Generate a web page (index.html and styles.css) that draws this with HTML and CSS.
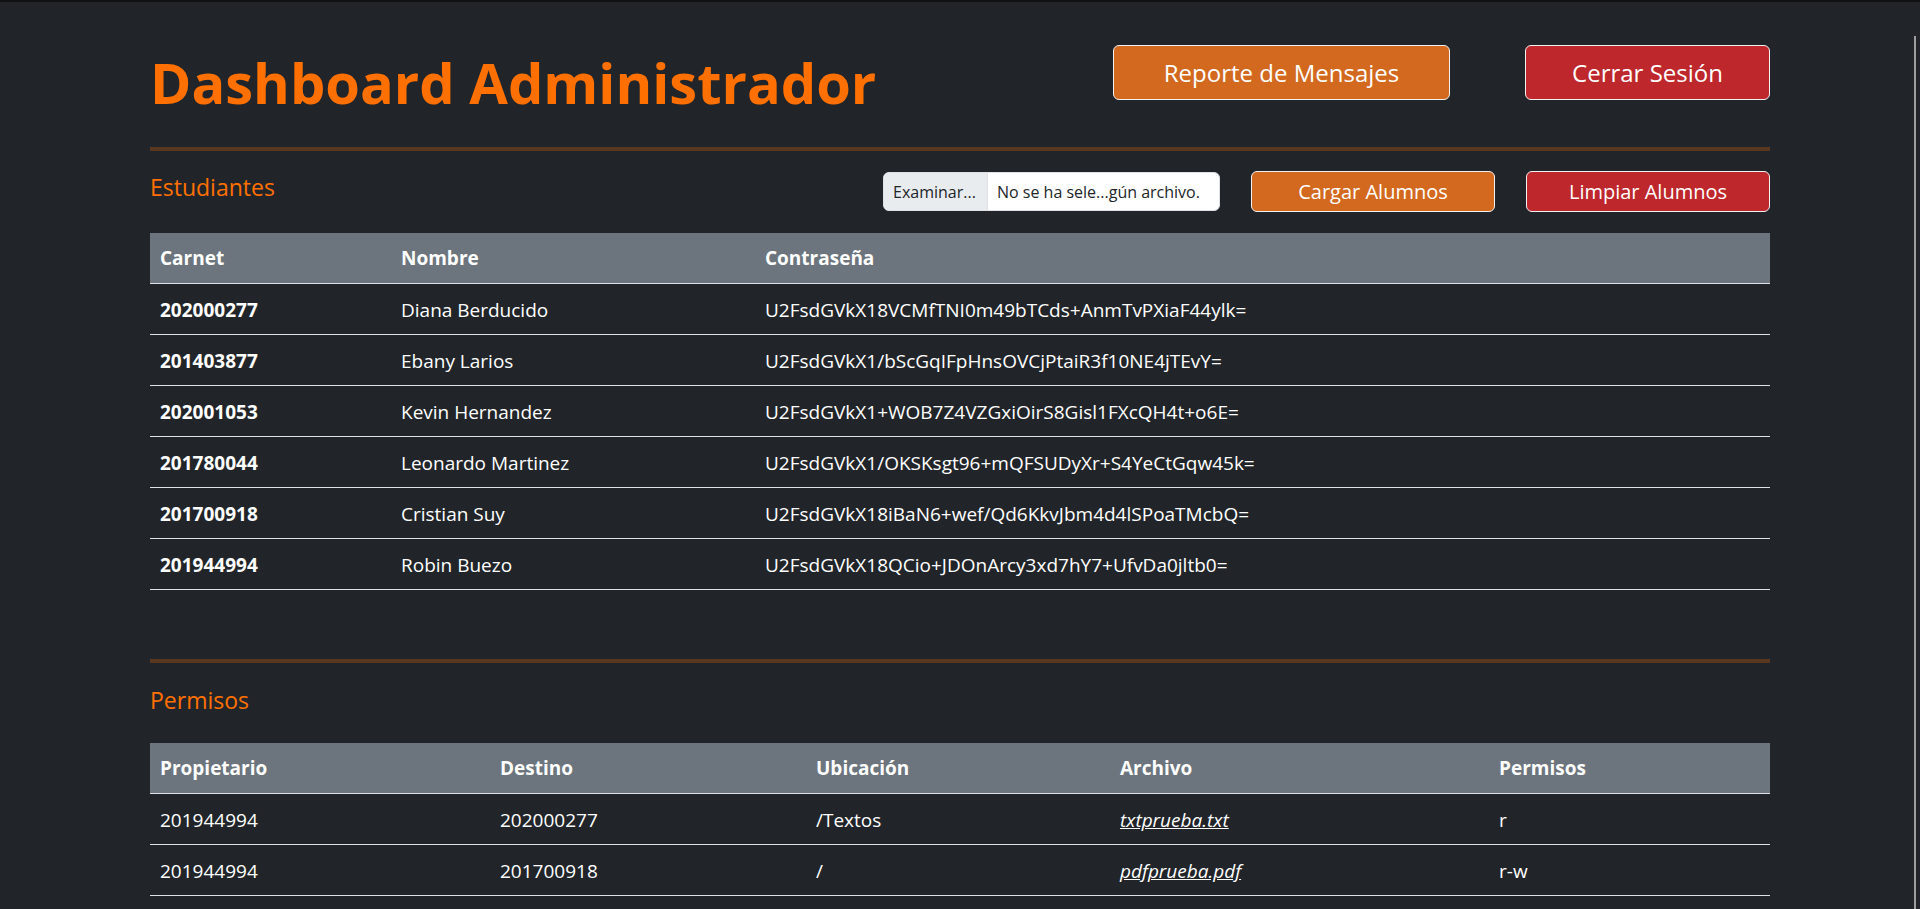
FILE: index.html
```html
<!DOCTYPE html>
<html lang="es">
<head>
<meta charset="utf-8">
<title>Dashboard Administrador</title>
<link rel="stylesheet" href="styles.css">
</head>
<body>
<div class="scroll-thumb"></div>
<main class="page">
  <header class="top">
    <h1 class="title">Dashboard Administrador</h1>
    <div class="top-actions">
      <button class="btn btn-orange btn-report">Reporte de Mensajes</button>
      <button class="btn btn-red btn-logout">Cerrar Sesión</button>
    </div>
  </header>
  <hr class="rule">
  <section class="section">
    <div class="section-head">
      <h4 class="section-title">Estudiantes</h4>
      <div class="controls">
        <div class="file-input"><span class="file-btn">Examinar...</span><span class="file-name">No se ha sele...gún archivo.</span></div>
        <button class="btn btn-orange btn-md">Cargar Alumnos</button>
        <button class="btn btn-red btn-md">Limpiar Alumnos</button>
      </div>
    </div>
    <table class="table">
      <colgroup><col class="c-carnet"><col class="c-nombre"><col></colgroup>
      <thead><tr><th>Carnet</th><th>Nombre</th><th>Contraseña</th></tr></thead>
      <tbody>
        <tr><td class="strong">202000277</td><td>Diana Berducido</td><td>U2FsdGVkX18VCMfTNI0m49bTCds+AnmTvPXiaF44ylk=</td></tr>
        <tr><td class="strong">201403877</td><td>Ebany Larios</td><td>U2FsdGVkX1/bScGqIFpHnsOVCjPtaiR3f10NE4jTEvY=</td></tr>
        <tr><td class="strong">202001053</td><td>Kevin Hernandez</td><td>U2FsdGVkX1+WOB7Z4VZGxiOirS8Gisl1FXcQH4t+o6E=</td></tr>
        <tr><td class="strong">201780044</td><td>Leonardo Martinez</td><td>U2FsdGVkX1/OKSKsgt96+mQFSUDyXr+S4YeCtGqw45k=</td></tr>
        <tr><td class="strong">201700918</td><td>Cristian Suy</td><td>U2FsdGVkX18iBaN6+wef/Qd6KkvJbm4d4lSPoaTMcbQ=</td></tr>
        <tr><td class="strong">201944994</td><td>Robin Buezo</td><td>U2FsdGVkX18QCio+JDOnArcy3xd7hY7+UfvDa0jltb0=</td></tr>
      </tbody>
    </table>
  </section>
  <hr class="rule rule-second">
  <section class="section">
    <h4 class="section-title section-title-solo">Permisos</h4>
    <table class="table table-perm">
      <colgroup><col class="p1"><col class="p2"><col class="p3"><col class="p4"><col></colgroup>
      <thead><tr><th>Propietario</th><th>Destino</th><th>Ubicación</th><th>Archivo</th><th>Permisos</th></tr></thead>
      <tbody>
        <tr><td>201944994</td><td>202000277</td><td>/Textos</td><td><a class="file-link" href="#">txtprueba.txt</a></td><td>r</td></tr>
        <tr><td>201944994</td><td>201700918</td><td>/</td><td><a class="file-link" href="#">pdfprueba.pdf</a></td><td>r-w</td></tr>
      </tbody>
    </table>
  </section>
</main>
</body>
</html>
```
FILE: styles.css
```css
html, body {
  margin: 0;
  padding: 0;
}
body {
  background: #212529;
  color: #ffffff;
  font-family: "Open Sans", "Noto Sans", sans-serif;
  border-top: 2px solid #111214;
  min-height: 907px;
}
.scroll-thumb {
  position: fixed;
  top: 36px;
  right: 4px;
  width: 2px;
  bottom: 0;
  background: #9e9e9e;
}
.page {
  margin: 0 150px;
}
.top {
  display: flex;
  align-items: flex-start;
  justify-content: space-between;
  padding-top: 43px;
}
.title {
  margin: 4px 0 0 0;
  font-size: 56px;
  line-height: 1.2;
  font-weight: 700;
  color: #ff7000;
}
.top-actions {
  display: flex;
  gap: 75px;
}
.btn {
  border: 1px solid #f2f2f2;
  border-radius: 6px;
  color: #ffffff;
  font-family: inherit;
  cursor: pointer;
  padding: 0;
}
.btn-orange { background: #d2691e; }
.btn-red { background: #be272b; }
.btn-report {
  width: 337px;
  height: 55px;
  font-size: 24px;
}
.btn-logout {
  width: 245px;
  height: 55px;
  font-size: 24px;
}
.btn-md {
  width: 244px;
  height: 41px;
  font-size: 20px;
}
.rule {
  border: 0;
  height: 4px;
  margin: 31px 0 0 0;
  background: #59381f;
}
.rule-second {
  margin-top: 69px;
}
.section-head {
  display: flex;
  justify-content: space-between;
  align-items: flex-start;
  margin-top: 20px;
}
.section-title {
  margin: 2px 0 0 0;
  font-size: 23px;
  line-height: 28px;
  font-weight: 400;
  color: #ff7000;
}
.section-title-solo {
  margin-top: 23px;
}
.controls {
  display: flex;
  align-items: center;
  gap: 31px;
}
.file-input {
  display: flex;
  width: 337px;
  height: 39px;
  box-sizing: border-box;
  border: 1px solid #dee2e6;
  border-radius: 6px;
  overflow: hidden;
  background: #ffffff;
  color: #212529;
  font-size: 16px;
  align-items: stretch;
}
.file-btn {
  display: flex;
  align-items: center;
  padding: 0 9px;
  background: #e9ecef;
  border-right: 1px solid #dee2e6;
  width: 104px;
  box-sizing: border-box;
}
.file-name {
  display: flex;
  align-items: center;
  padding-left: 9px;
  white-space: nowrap;
}
.table {
  width: 100%;
  border-collapse: collapse;
  table-layout: fixed;
  margin-top: 21px;
  font-size: 19px;
  line-height: 30px;
}
.table-perm {
  margin-top: 29px;
}
.c-carnet { width: 241px; }
.c-nombre { width: 364px; }
.p1 { width: 340px; }
.p2 { width: 316px; }
.p3 { width: 304px; }
.p4 { width: 379px; }
.table th {
  background: #6c757d;
  text-align: left;
  font-weight: 700;
  padding: 10px 10px;
  border-bottom: 1px solid #dee2e6;
}
.table td {
  padding: 11px 10px 9px;
  border-bottom: 1px solid #dee2e6;
  white-space: nowrap;
}
.table td.strong {
  font-weight: 700;
}
.file-link {
  color: #ffffff;
  font-style: italic;
  text-decoration: underline;
}
```
